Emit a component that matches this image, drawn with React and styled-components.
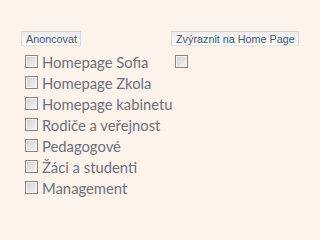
import React from "react";
import styled, { createGlobalStyle } from "styled-components";

const GlobalStyle = createGlobalStyle`
  html, body {
    margin: 0;
    padding: 0;
    background: #fdf3ea;
  }
  body {
    font-family: "Lato", "Liberation Sans", sans-serif;
  }
`;

const targets = [
  "Homepage Sofia",
  "Homepage Zkola",
  "Homepage kabinetu",
  "Rodiče a veřejnost",
  "Pedagogové",
  "Žáci a studenti",
  "Management",
];

const App = () => {
  return (
    <Page>
      <GlobalStyle />
      <Column>
        <Legend>Anoncovat</Legend>
        <List>
          {targets.map((t) => (
            <Row key={t}>
              <Check type="checkbox" />
              <span>{t}</span>
            </Row>
          ))}
        </List>
      </Column>
      <Column>
        <Legend>Zvýraznit na Home Page</Legend>
        <List>
          <Row>
            <Check type="checkbox" />
          </Row>
        </List>
      </Column>
    </Page>
  );
};

const Page = styled.div`
  width: 319px;
  height: 216px;
  box-sizing: border-box;
  padding: 31px 0 0 21px;
  display: grid;
  grid-template-columns: 150px 150px;
  align-items: start;
`;

const Column = styled.div`
  display: flex;
  flex-direction: column;
  align-items: flex-start;
`;

const Legend = styled.div`
  height: 15px;
  box-sizing: border-box;
  padding: 0 3px 0 4px;
  border: 1px solid #d6d6d6;
  border-bottom-color: #e4e4e4;
  background: linear-gradient(#ececec, #fbfbfb);
  font-family: "Liberation Sans", Arial, sans-serif;
  font-size: 10.8px;
  line-height: 14px;
  color: #4b5670;
  white-space: nowrap;
`;

const List = styled.div`
  margin-top: 5px;
  padding-left: 4px;
  display: flex;
  flex-direction: column;
`;

const Row = styled.label`
  height: 21px;
  display: flex;
  align-items: center;
  gap: 4px;
  font-size: 14.8px;
  font-weight: 400;
  color: #6b7080;
  white-space: nowrap;
`;

const Check = styled.input`
  appearance: none;
  margin: 0;
  width: 13px;
  height: 13px;
  flex: none;
  box-sizing: border-box;
  border: 1px solid #858585;
  box-shadow: inset 0 0 0 1px #f2f2f2;
  background: linear-gradient(135deg, #cfcfcf, #f6f6f6);
`;

export default App;
